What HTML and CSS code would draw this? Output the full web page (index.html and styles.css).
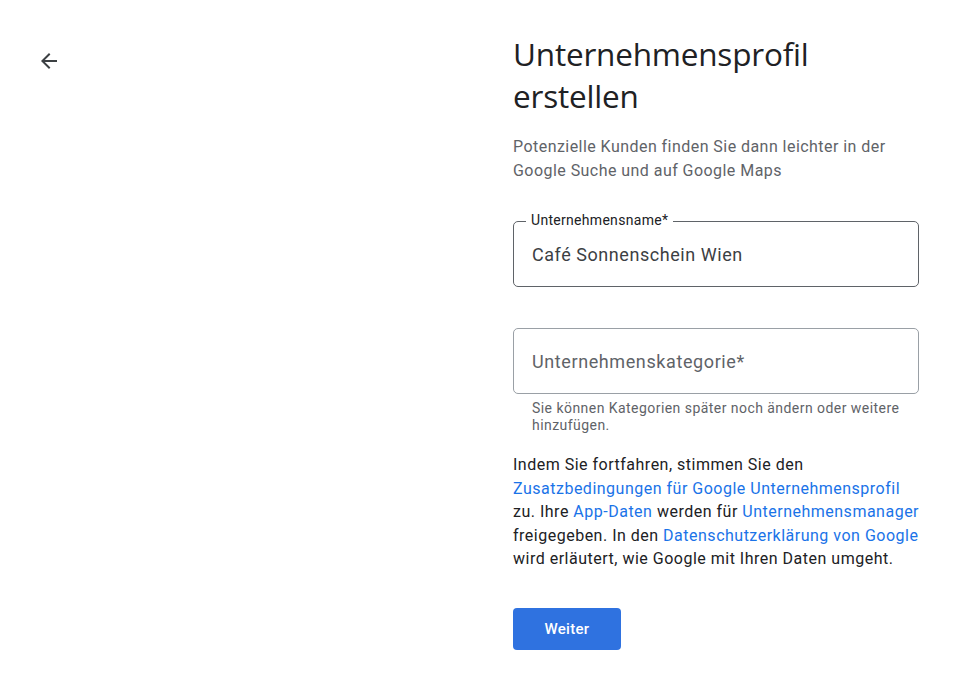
FILE: index.html
```html
<!DOCTYPE html>
<html lang="de">
<head>
    <meta charset="UTF-8">
    <meta name="viewport" content="width=device-width, initial-scale=1.0">
    <title>Unternehmensprofil erstellen</title>
    <link rel="stylesheet" href="styles.css">
</head>
<body>
    <div class="page">
        <div class="side">
            <button class="back-btn" aria-label="Zurück">
                <svg width="24" height="24" viewBox="0 0 24 24"><path d="M20 11H7.83l5.59-5.59L12 4l-8 8 8 8 1.41-1.41L7.83 13H20v-2z" fill="#3c4043"/></svg>
            </button>
        </div>

        <main class="form">
            <h1>Unternehmensprofil erstellen</h1>
            <p class="intro">Potenzielle Kunden finden Sie dann leichter in der<br>Google Suche und auf Google Maps</p>

            <div class="field filled">
                <span class="field-label">Unternehmensname*</span>
                <div class="field-value">Café Sonnenschein Wien</div>
            </div>

            <div class="field empty">
                <div class="field-placeholder">Unternehmenskategorie*</div>
            </div>
            <p class="helper">Sie können Kategorien später noch ändern oder weitere hinzufügen.</p>

            <p class="terms">Indem Sie fortfahren, stimmen Sie den<br><a href="#">Zusatzbedingungen für Google Unternehmensprofil</a><br>zu. Ihre <a href="#">App-Daten</a> werden für <a href="#">Unternehmensmanager</a><br>freigegeben. In den <a href="#">Datenschutzerklärung von Google</a><br>wird erläutert, wie Google mit Ihren Daten umgeht.</p>

            <button class="next-btn">Weiter</button>
        </main>
    </div>
</body>
</html>
```

FILE: styles.css
```css
body {
    margin: 0;
    padding: 0;
    background: #ffffff;
    font-family: 'Roboto', 'Liberation Sans', sans-serif;
    color: #202124;
}

.page {
    display: flex;
    min-height: 691px;
}

.side {
    width: 513px;
    padding: 49px 0 0 37px;
    box-sizing: border-box;
}

.back-btn {
    background: none;
    border: none;
    padding: 0;
    width: 24px;
    height: 24px;
    cursor: pointer;
}

.form {
    width: 406px;
    padding-top: 33px;
}

h1 {
    margin: 0;
    font-family: 'Open Sans', 'Roboto', sans-serif;
    font-weight: 400;
    font-size: 31.5px;
    line-height: 42px;
    color: #202124;
    letter-spacing: -0.2px;
}

.intro {
    margin: 18px 0 0;
    font-size: 16px;
    line-height: 24px;
    letter-spacing: 0.45px;
    color: #5f6368;
    white-space: nowrap;
}

.field {
    position: relative;
    height: 66px;
    box-sizing: border-box;
    border-radius: 5px;
    display: flex;
    align-items: center;
    padding: 0 18px;
}

.field.filled {
    margin-top: 38px;
    border: 1.5px solid #5f6368;
}

.field.empty {
    margin-top: 41px;
    border: 1px solid #9aa0a6;
}

.field-label {
    position: absolute;
    top: -10px;
    left: 12px;
    padding: 0 5px;
    background: #ffffff;
    font-size: 14px;
    line-height: 17px;
    letter-spacing: 0.3px;
    color: #202124;
}

.field-value {
    font-size: 18px;
    letter-spacing: 0.55px;
    color: #3c4043;
}

.field-placeholder {
    font-size: 18px;
    letter-spacing: 0.6px;
    color: #5f6368;
}

.helper {
    margin: 6px 0 0 19px;
    font-size: 14px;
    line-height: 17px;
    letter-spacing: 0.45px;
    color: #5f6368;
}

.terms {
    margin: 19px 0 0;
    font-size: 16px;
    line-height: 23.5px;
    letter-spacing: 0.5px;
    color: #202124;
    white-space: nowrap;
}

.terms a {
    color: #1a73e8;
    text-decoration: none;
}

.next-btn {
    margin-top: 37px;
    width: 108px;
    height: 42px;
    border: none;
    border-radius: 4px;
    background: #2f72e0;
    color: #ffffff;
    font-family: 'Roboto', sans-serif;
    font-size: 15px;
    font-weight: 500;
    letter-spacing: 0.3px;
    cursor: pointer;
}
```
